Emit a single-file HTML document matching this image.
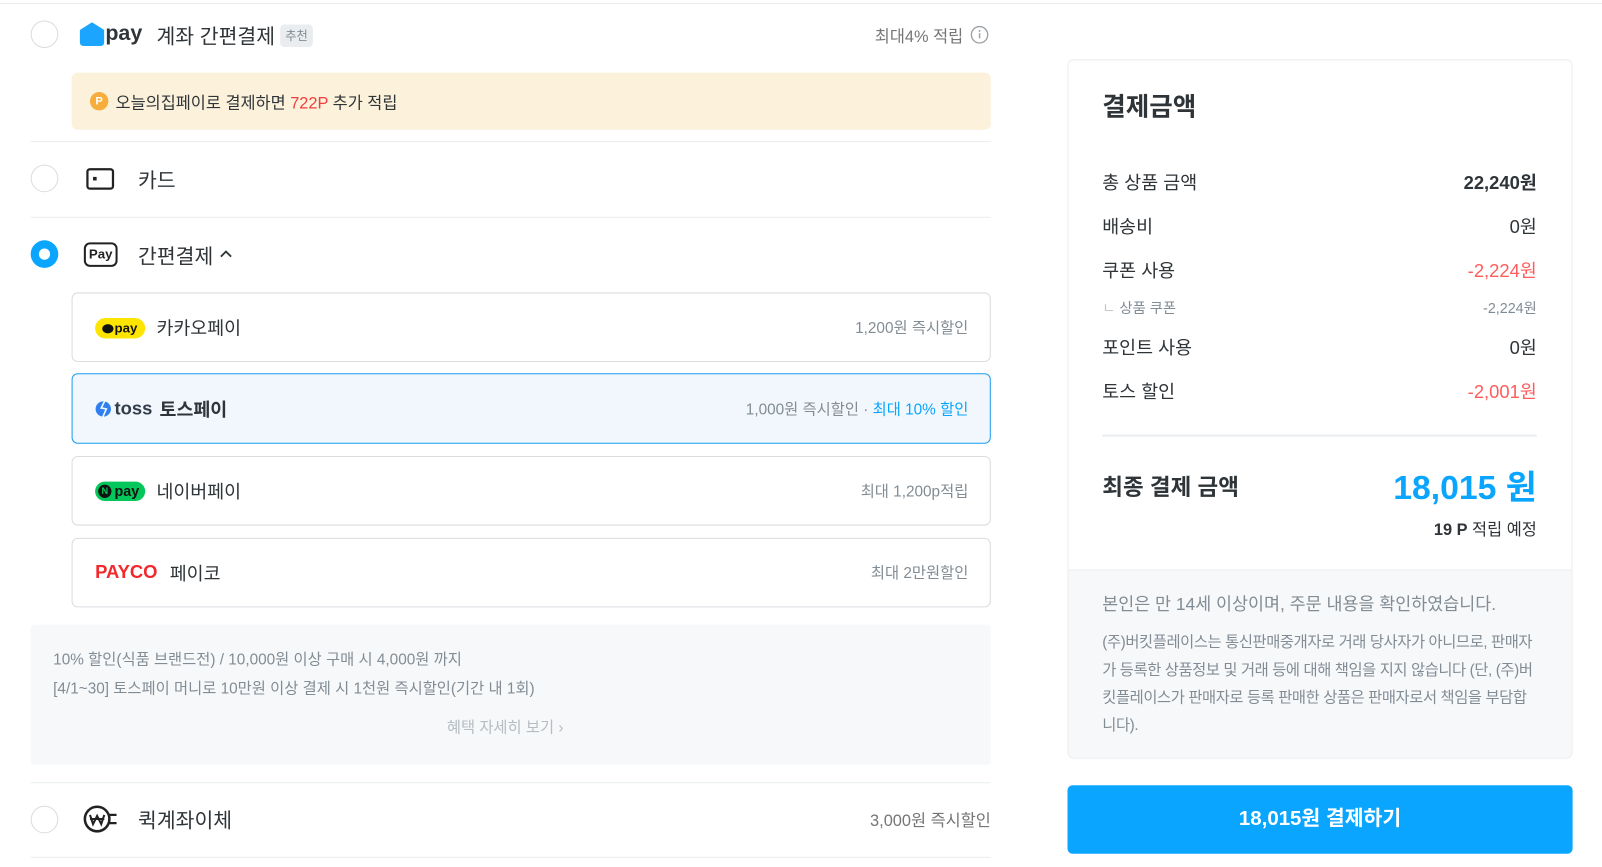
<!DOCTYPE html>
<html><head><meta charset="utf-8"><style>
*{box-sizing:border-box;margin:0;padding:0}
body{width:1602px;height:867px;background:#fff;font-family:"Liberation Sans","Noto Sans CJK KR",sans-serif;color:#2f3438;position:relative;overflow:hidden}
#w{position:absolute;left:0;top:0;width:1567px;height:848px;transform:scale(1.0225);transform-origin:0 0}
.a{position:absolute}
.radio{position:absolute;width:27px;height:27px;border:1.5px solid #dadce0;border-radius:50%;left:30px}
.hr{position:absolute;left:30px;width:939px;height:1px;background:#eaedef}
.card{position:absolute;left:70px;width:899px;border:1px solid #dadce0;border-radius:6px;background:#fff}
.card .nm{position:absolute;left:82px;top:50%;transform:translateY(-50%);font-size:18px}
.card .rt{position:absolute;right:21px;top:50%;transform:translateY(-50%);font-size:15px;color:#828c94}
.t{transform:translateY(-50%)}
.row{position:absolute;left:1078px;width:425px;font-size:18px;display:flex;justify-content:space-between;transform:translateY(-50%)}
</style></head><body><div id="w">
<div class="a" style="left:0;top:3px;width:1602px;height:1px;background:#eaedef"></div>

<div class="radio" style="top:20px"></div>
<svg class="a" style="left:78px;top:22px" width="24" height="23" viewBox="0 0 24 23"><path d="M12 1 L23 8 V19 Q23 22 20 22 H4 Q1 22 1 19 V8 Z" fill="#1ba5ff" stroke="#1ba5ff" stroke-linejoin="round" stroke-width="2"/></svg>
<div class="a t" style="left:103px;top:33px;font-size:21px;font-weight:bold;color:#2f3438">pay</div>
<div class="a t" style="left:153px;top:34px;font-size:20px">계좌 간편결제</div>
<div class="a" style="left:274px;top:24px;width:32px;height:22px;background:#eaedef;border-radius:4px;font-size:12px;color:#828c94;text-align:center;line-height:22px">추천</div>
<div class="a t" style="right:625px;top:34px;font-size:16px;color:#757575">최대4% 적립</div>
<svg class="a" style="left:949px;top:25px" width="18" height="18" viewBox="0 0 18 18"><circle cx="9" cy="9" r="8" fill="none" stroke="#9aa0a6" stroke-width="1.3"/><rect x="8.3" y="7.5" width="1.4" height="5" fill="#9aa0a6"/><circle cx="9" cy="5.3" r="0.9" fill="#9aa0a6"/></svg>

<div class="a" style="left:70px;top:71px;width:899px;height:56px;background:#fcf2dc;border-radius:6px"></div>
<div class="a" style="left:88px;top:90px;width:18px;height:18px;border-radius:50%;background:#f7ad3b;color:#fff;font-size:11px;font-weight:bold;text-align:center;line-height:18px">P</div>
<div class="a t" style="left:113px;top:99px;font-size:16px">오늘의집페이로 결제하면 <span style="color:#f03e3e">722P</span> 추가 적립</div>
<div class="hr" style="top:138px"></div>

<div class="radio" style="top:161px"></div>
<svg class="a" style="left:84px;top:164px" width="28" height="22" viewBox="0 0 28 22"><rect x="1.5" y="1.5" width="25" height="19" rx="2.5" fill="none" stroke="#222" stroke-width="2.2"/><rect x="7" y="9" width="3.5" height="3.5" fill="#222"/></svg>
<div class="a t" style="left:135px;top:175px;font-size:20px">카드</div>
<div class="hr" style="top:212px"></div>

<div class="a" style="left:30px;top:235px;width:27px;height:27px;border-radius:50%;background:#0aa5ff"></div>
<div class="a" style="left:38px;top:243px;width:11px;height:11px;border-radius:50%;background:#fff"></div>
<div class="a" style="left:82px;top:237px;width:33px;height:24px;border:2px solid #222;border-radius:6px;font-size:13px;font-weight:bold;text-align:center;line-height:20px;color:#222">Pay</div>
<div class="a t" style="left:135px;top:249px;font-size:20px">간편결제</div>
<svg class="a" style="left:214px;top:243px" width="14" height="10" viewBox="0 0 14 10"><path d="M2 8 L7 3 L12 8" fill="none" stroke="#2f3438" stroke-width="1.8"/></svg>

<div class="card" style="top:286px;height:68px">
  <div class="a" style="left:22px;top:24px;width:49px;height:20px;border-radius:10px;background:#fee500;font-size:13px;font-weight:bold;line-height:20px;padding-left:19px;color:#111">pay</div>
  <div class="a" style="left:29px;top:30px;width:11px;height:9px;border-radius:50%;background:#111"></div>
  <div class="nm">카카오페이</div><div class="rt">1,200원 즉시할인</div>
</div>
<div class="card" style="top:365px;height:69px;border-color:#1a9ef0;background:#f1f7fc">
  <svg class="a" style="left:21px;top:25px" width="19" height="18" viewBox="0 0 19 18"><circle cx="9" cy="9" r="7.5" fill="#2f7ff0"/><path d="M11 0 L7 8 L12 9 L8 18" fill="none" stroke="#f1f7fc" stroke-width="1.6"/></svg>
  <div class="a t" style="left:41px;top:34px;font-size:18px;font-weight:bold;color:#333d4b">toss</div>
  <div class="nm" style="left:85px;font-weight:bold">토스페이</div><div class="rt">1,000원 즉시할인 · <span style="color:#0aa5ff">최대 10% 할인</span></div>
</div>
<div class="card" style="top:446px;height:68px">
  <div class="a" style="left:22px;top:24px;width:49px;height:19px;border-radius:10px;background:#03c75a;font-size:14px;font-weight:bold;line-height:19px;padding-left:19px;color:#111">pay</div>
  <div class="a" style="left:25px;top:27px;width:13px;height:13px;border-radius:50%;background:#111;color:#03c75a;font-size:9px;font-weight:bold;text-align:center;line-height:13px">N</div>
  <div class="nm">네이버페이</div><div class="rt">최대 1,200p적립</div>
</div>
<div class="card" style="top:526px;height:68px">
  <div class="a t" style="left:22px;top:33px;font-size:18px;font-weight:bold;color:#f2282d">PAYCO</div>
  <div class="nm" style="left:95px">페이코</div><div class="rt">최대 2만원할인</div>
</div>

<div class="a" style="left:30px;top:611px;width:939px;height:137px;background:#f7f8fa;border-radius:4px"></div>
<div class="a" style="left:52px;top:632px;font-size:15px;color:#828c94;line-height:28px">10% 할인(식품 브랜드전) / 10,000원 이상 구매 시 4,000원 까지<br>[4/1~30] 토스페이 머니로 10만원 이상 결제 시 1천원 즉시할인(기간 내 1회)</div>
<div class="a t" style="left:437px;top:711px;font-size:15px;color:#b5bcc2">혜택 자세히 보기 ›</div>
<div class="hr" style="top:765px"></div>

<div class="radio" style="top:788px"></div>
<svg class="a" style="left:81px;top:787px" width="34" height="28" viewBox="0 0 34 28"><circle cx="14" cy="14" r="12" fill="none" stroke="#222" stroke-width="2.5"/><path d="M7 10 L10 19 L14 11 L18 19 L21 10 M7 14 H21" fill="none" stroke="#222" stroke-width="2"/><path d="M26 10 H33 M26 18 H33" stroke="#222" stroke-width="2.2"/></svg>
<div class="a t" style="left:135px;top:801px;font-size:20px">퀵계좌이체</div>
<div class="a t" style="right:598px;top:801px;font-size:16px;color:#757575">3,000원 즉시할인</div>
<div class="hr" style="top:838px"></div>

<div class="a" style="left:1044px;top:58px;width:494px;height:684px;border:1px solid #eaedef;border-radius:6px;overflow:hidden">
  <div class="a" style="left:0;top:498px;width:494px;height:186px;background:#f7f8fa;border-top:1px solid #eaedef"></div>
</div>
<div class="a t" style="left:1078px;top:103px;font-size:25px;font-weight:bold">결제금액</div>
<div class="row" style="top:178px"><span>총 상품 금액</span><span style="font-weight:bold">22,240원</span></div>
<div class="row" style="top:221px"><span>배송비</span><span>0원</span></div>
<div class="row" style="top:264px"><span>쿠폰 사용</span><span style="color:#ff5c5c">-2,224원</span></div>
<div class="row" style="top:301px;font-size:14px;color:#828c94"><span><span style="color:#c2c8cc">ㄴ</span> 상품 쿠폰</span><span>-2,224원</span></div>
<div class="row" style="top:339px"><span>포인트 사용</span><span>0원</span></div>
<div class="row" style="top:382px"><span>토스 할인</span><span style="color:#ff5c5c">-2,001원</span></div>
<div class="a" style="left:1078px;top:425px;width:425px;height:2px;background:#eaedef"></div>
<div class="a t" style="left:1078px;top:475px;font-size:22px;font-weight:bold">최종 결제 금액</div>
<div class="a t" style="right:64px;top:474px;font-size:33px;font-weight:bold;color:#0aa5ff">18,015 원</div>
<div class="a t" style="right:64px;top:516px;font-size:16px"><b>19 P</b> 적립 예정</div>
<div class="a t" style="left:1078px;top:589px;font-size:17px;color:#828c94">본인은 만 14세 이상이며, 주문 내용을 확인하였습니다.</div>
<div class="a" style="left:1078px;top:615px;width:428px;font-size:15px;color:#828c94;line-height:27px;letter-spacing:-0.4px">(주)버킷플레이스는 통신판매중개자로 거래 당사자가 아니므로, 판매자가 등록한 상품정보 및 거래 등에 대해 책임을 지지 않습니다 (단, (주)버킷플레이스가 판매자로 등록 판매한 상품은 판매자로서 책임을 부담합니다).</div>
<div class="a" style="left:1044px;top:768px;width:494px;height:67px;background:#0aa5ff;border-radius:5px;color:#fff;font-size:20px;font-weight:bold;text-align:center;line-height:67px">18,015원 결제하기</div>
</div></body></html>
